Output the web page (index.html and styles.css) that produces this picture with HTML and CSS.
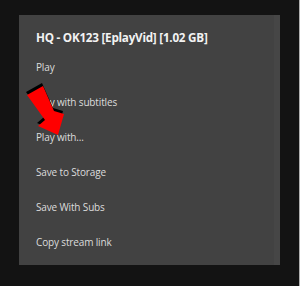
FILE: index.html
```html
<!DOCTYPE html>
<html>
<head>
<meta charset="utf-8">
<link rel="stylesheet" href="styles.css">
</head>
<body>
<div class="screen">
  <div class="dialog">
    <div class="title">HQ - OK123 [EplayVid] [1.02 GB]</div>
    <ul class="menu">
      <li>Play</li>
      <li>Play with subtitles</li>
      <li>Play with...</li>
      <li>Save to Storage</li>
      <li>Save With Subs</li>
      <li>Copy stream link</li>
    </ul>
    <svg class="arrow" width="50" height="60" viewBox="0 0 50 60">
      <polygon points="6,15 22,6 33,31 43,34 37,55 17,46 24,40" fill="#000" transform="translate(-1,-3)"/>
      <polygon points="6,15 22,6 33,31 43,34 37,55 17,46 24,40" fill="#ff0000"/>
    </svg>
  </div>
  <div class="edge"></div>
</div>
</body>
</html>
```
FILE: styles.css
```css
html, body {
  margin: 0;
  padding: 0;
  background: #131313;
}
.screen {
  width: 300px;
  height: 286px;
  position: relative;
  display: flex;
  padding-top: 15px;
  box-sizing: border-box;
}
.dialog {
  position: relative;
  margin-left: 19px;
  width: 261px;
  height: 250px;
  box-sizing: border-box;
  background: #424242;
  border-right: 6px solid #464646;
  padding: 13px 0 5px 17px;
  font-family: "Open Sans", "Noto Sans", sans-serif;
}
.title {
  font-size: 11.7px;
  font-weight: 700;
  color: #f2f2f2;
  line-height: 18px;
  height: 18px;
  margin-bottom: 4px;
  letter-spacing: -0.25px;
}
.menu {
  list-style: none;
  margin: 0;
  padding: 0;
}
.menu li {
  height: 35px;
  line-height: 35px;
  font-size: 10px;
  color: #dcdcdc;
  letter-spacing: -0.15px;
}
.arrow {
  position: absolute;
  left: 2px;
  top: 65px;
}
.edge {
  position: absolute;
  right: 0;
  top: 0;
  width: 1px;
  height: 286px;
  background: #b0b0b0;
}
```
